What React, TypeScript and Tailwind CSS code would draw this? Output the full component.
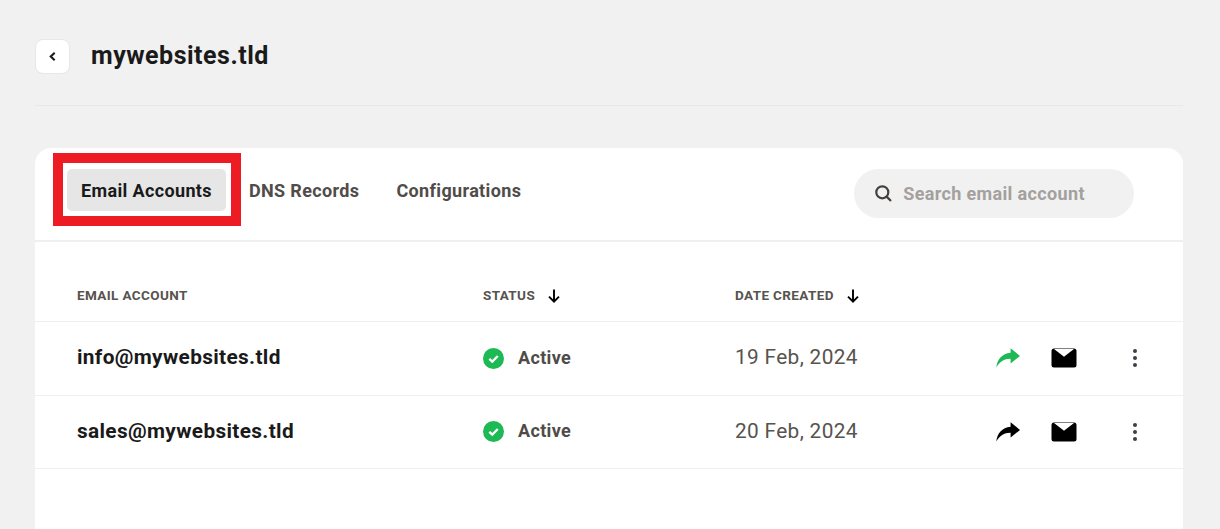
import React from "react";

const Reply = ({ className }: { className: string }) => (
  <svg viewBox="0 0 24 20" className={className} fill="currentColor">
    <path d="M14.6 0.3 L24 8 L14.6 15.4 L14.6 10.8 C8.6 10.6 3.6 13.6 0.3 19.6 C1 11.6 6 5.6 14.6 4.8 Z" />
  </svg>
);

const Mail = () => (
  <svg viewBox="0 0 26 20" className="w-[26px] h-[20px]">
    <rect x="0.5" y="0.5" width="25" height="19" rx="2.5" fill="#000" />
    <path d="M3 1 H23 L13 8.8 Z" fill="#fff" />
  </svg>
);

const Dots = () => (
  <svg viewBox="0 0 4 18" className="w-[4px] h-[18px]" fill="#3f3f46">
    <circle cx="2" cy="2" r="2" />
    <circle cx="2" cy="9" r="2" />
    <circle cx="2" cy="16" r="2" />
  </svg>
);

const Check = () => (
  <svg viewBox="0 0 21 21" className="w-[21px] h-[21px]">
    <circle cx="10.5" cy="10.5" r="10.5" fill="#1db954" />
    <path d="M6.3 10.8 L9.3 13.6 L14.8 8" fill="none" stroke="#fff" strokeWidth="2.3" />
  </svg>
);

const Arrow = () => (
  <svg viewBox="0 0 12 14" className="w-[12px] h-[14px]" fill="none" stroke="#000" strokeWidth="1.9">
    <path d="M6 0.5 V12.5 M1 7.6 L6 12.6 L11 7.6" />
  </svg>
);

const Row = ({ email, date, green, h }: { email: string; date: string; green?: boolean; h: string }) => (
  <div className={`flex items-center ${h} pl-[42px] border-b border-[#efefef]`}>
    <div className="w-[406px] text-[20.8px] font-bold text-[#1a1a1a] -mt-[1px]">{email}</div>
    <div className="w-[252px] flex items-center gap-[14px] -mt-[1px]">
      <Check />
      <span className="text-[18px] font-bold text-[#4f4b48] -mt-[2px]">Active</span>
    </div>
    <div className="w-[261px] text-[20.8px] text-[#57534e] -mt-[1px]">{date}</div>
    <div className="flex items-center -mt-[1px]">
      <Reply className={`w-[24px] h-[20px] ${green ? "text-[#1db954]" : "text-black"}`} />
      <div className="ml-[31px]"><Mail /></div>
      <div className="ml-[56px]"><Dots /></div>
    </div>
  </div>
);

export default function App() {
  return (
    <div className="h-[529px] overflow-hidden bg-[#f1f1f1] pl-[35px] pr-[37px] pt-[39px] font-['Roboto',sans-serif] tracking-[0.022em]">
      <div className="flex items-center h-[35px] gap-[21px]">
        <button className="w-[35px] h-[35px] flex items-center justify-center bg-white rounded-[8px] border border-[#e7e7e7]">
          <svg viewBox="0 0 8 10" className="w-[7px] h-[9px] -ml-[1px]" fill="none" stroke="#1a1a1a" strokeWidth="2.4">
            <path d="M6.5 0.8 L2 5 L6.5 9.2" />
          </svg>
        </button>
        <h1 className="text-[25px] tracking-[0.02em] font-bold text-[#1a1a1a] leading-none -mt-[2px]">mywebsites.tld</h1>
      </div>
      <div className="mt-[31px] border-t border-[#e8e8e8]" />
      <div className="mt-[42px] bg-white rounded-t-[16px] h-[400px]">
        <div className="flex items-start h-[94px] border-b-2 border-[#efefef] pl-[18px] pt-[5px]">
          <div className="border-[10px] border-[#ed1c24] w-[188px] h-[73px] flex items-center justify-center">
            <div className="w-[159px] h-[42px] mt-[1px] -ml-[1px] rounded-[5px] bg-[#e6e6e6] flex items-center justify-center text-[18px] font-bold text-[#1a1a1a]">
              Email Accounts
            </div>
          </div>
          <div className="ml-[8px] mt-[26px] text-[18px] leading-[24px] font-bold text-[#504c49]">DNS Records</div>
          <div className="ml-[37px] mt-[26px] text-[18px] leading-[24px] font-bold text-[#504c49]">Configurations</div>
          <div className="ml-[333px] mt-[16px] w-[280px] h-[49px] rounded-full bg-[#f1f1f1] flex items-center pl-[21px] gap-[11px]">
            <svg viewBox="0 0 17 17" className="w-[17px] h-[17px]" fill="none" stroke="#44403c" strokeWidth="2.2">
              <circle cx="7.3" cy="7.3" r="6" />
              <path d="M11.6 11.6 L16 16" />
            </svg>
            <span className="text-[18px] font-bold text-[#a3a09d]">Search email account</span>
          </div>
        </div>
        <div className="flex items-center h-[80px] pl-[42px] border-b border-[#efefef] text-[13.5px] tracking-[0.028em] font-bold text-[#57534e] pt-[28px]">
          <div className="w-[406px]">EMAIL ACCOUNT</div>
          <div className="w-[252px] flex items-center gap-[13px]">
            <span>STATUS</span>
            <Arrow />
          </div>
          <div className="flex items-center gap-[13px]">
            <span>DATE CREATED</span>
            <Arrow />
          </div>
        </div>
        <Row email="info@mywebsites.tld" date="19 Feb, 2024" green h="h-[74px]" />
        <Row email="sales@mywebsites.tld" date="20 Feb, 2024" h="h-[73px]" />
      </div>
    </div>
  );
}
